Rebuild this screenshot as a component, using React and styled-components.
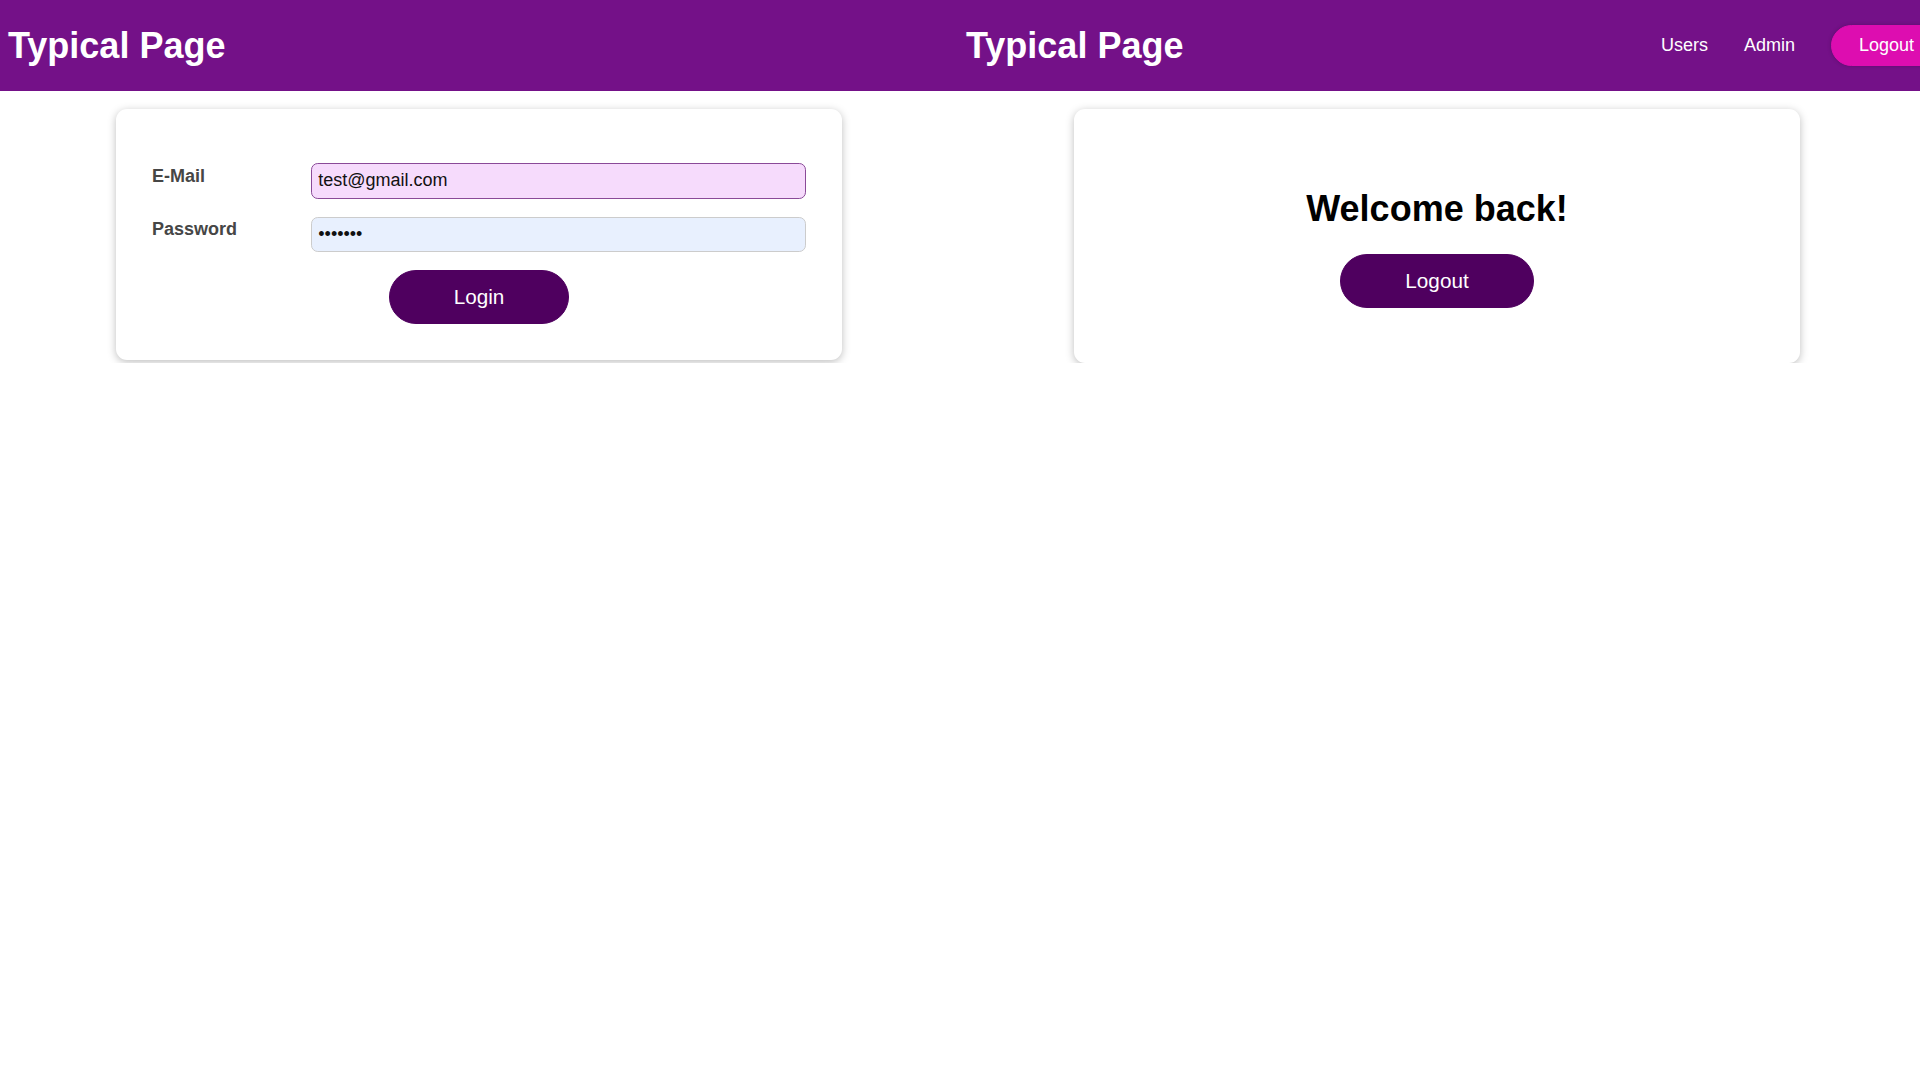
import React from 'react'
import styled, { createGlobalStyle } from 'styled-components'

const GlobalStyle = createGlobalStyle`
  * {
    box-sizing: border-box;
  }
  html {
    font-family: "Liberation Sans", Arial, sans-serif;
    font-size: 18px;
  }
  body {
    margin: 0;
    background: #ffffff;
    overflow-x: hidden;
  }
`

const Header = styled.header`
  height: 91px;
  background: #741188;
  display: grid;
  grid-template-columns: 958px 1fr;
  overflow: hidden;
`

const HeaderHalf = styled.div`
  display: flex;
  align-items: center;
  justify-content: space-between;
  padding: 0 8px;
  min-width: 0;
`

const Title = styled.h1`
  margin: 0;
  color: #ffffff;
  font-size: 36px;
  font-weight: bold;
  white-space: nowrap;
`

const Nav = styled.ul`
  list-style: none;
  margin: 0 -30px 0 0;
  padding: 0;
  display: flex;
  align-items: center;
  flex-shrink: 0;
`

const NavItem = styled.li`
  margin-left: 36px;
`

const NavLink = styled.a`
  text-decoration: none;
  color: #ffffff;
  font-size: 18px;
`

const NavButton = styled.button`
  font: inherit;
  background: #dd0db0;
  border: 1px solid #dd0db0;
  padding: 9px 27px;
  color: #ffffff;
  border-radius: 22px;
  box-shadow: 0 0 4.5px rgba(0, 0, 0, 0.2);
  cursor: pointer;
`

const Main = styled.main`
  display: grid;
  grid-template-columns: 958px 958px;
  padding-top: 18px;
  align-items: start;
`

const Card = styled.div`
  width: 726px;
  margin: 0 auto;
  background: #ffffff;
  border-radius: 11px;
  box-shadow: 0 2px 9px rgba(0, 0, 0, 0.26);
  padding: ${(p) => (p.$wide ? '55px 54px' : '36px')};
  text-align: ${(p) => (p.$wide ? 'center' : 'left')};
`

const Control = styled.div`
  margin: 18px 0;
  display: flex;
  align-items: center;
`

const Label = styled.label`
  width: 159px;
  flex-shrink: 0;
  font-weight: bold;
  color: #464646;
  margin-bottom: 9px;
`

const Input = styled.input`
  flex: 1;
  min-width: 0;
  font: inherit;
  font-size: 18px;
  color: #111111;
  padding: 6.3px;
  border-radius: 6.75px;
  border: 1px solid ${(p) => (p.$focused ? '#8a4a98' : '#cccccc')};
  background: ${(p) => (p.$focused ? '#f6dbfc' : '#e8f0fe')};
  outline: none;
`

const Actions = styled.div`
  text-align: center;
`

const Button = styled.button`
  font: inherit;
  font-size: 20.7px;
  border: 1px solid #4f005f;
  background: #4f005f;
  color: #ffffff;
  padding: 14px 64px;
  border-radius: 34px;
  cursor: pointer;
`

const Welcome = styled.h1`
  font-size: 36px;
  font-weight: bold;
  color: #000000;
  margin: 24px 0;
`

export default function App() {
  return (
    <>
      <GlobalStyle />
      <Header>
        <HeaderHalf>
          <Title>Typical Page</Title>
        </HeaderHalf>
        <HeaderHalf>
          <Title>Typical Page</Title>
          <Nav>
            <NavItem>
              <NavLink href="#">Users</NavLink>
            </NavItem>
            <NavItem>
              <NavLink href="#">Admin</NavLink>
            </NavItem>
            <NavItem>
              <NavButton>Logout</NavButton>
            </NavItem>
          </Nav>
        </HeaderHalf>
      </Header>
      <Main>
        <Card>
          <form onSubmit={(e) => e.preventDefault()}>
            <Control>
              <Label htmlFor="email">E-Mail</Label>
              <Input id="email" type="email" $focused defaultValue="test@gmail.com" />
            </Control>
            <Control>
              <Label htmlFor="password">Password</Label>
              <Input id="password" type="password" defaultValue="1234567" />
            </Control>
            <Actions>
              <Button type="submit">Login</Button>
            </Actions>
          </form>
        </Card>
        <Card $wide>
          <Welcome>Welcome back!</Welcome>
          <Button>Logout</Button>
        </Card>
      </Main>
    </>
  )
}
